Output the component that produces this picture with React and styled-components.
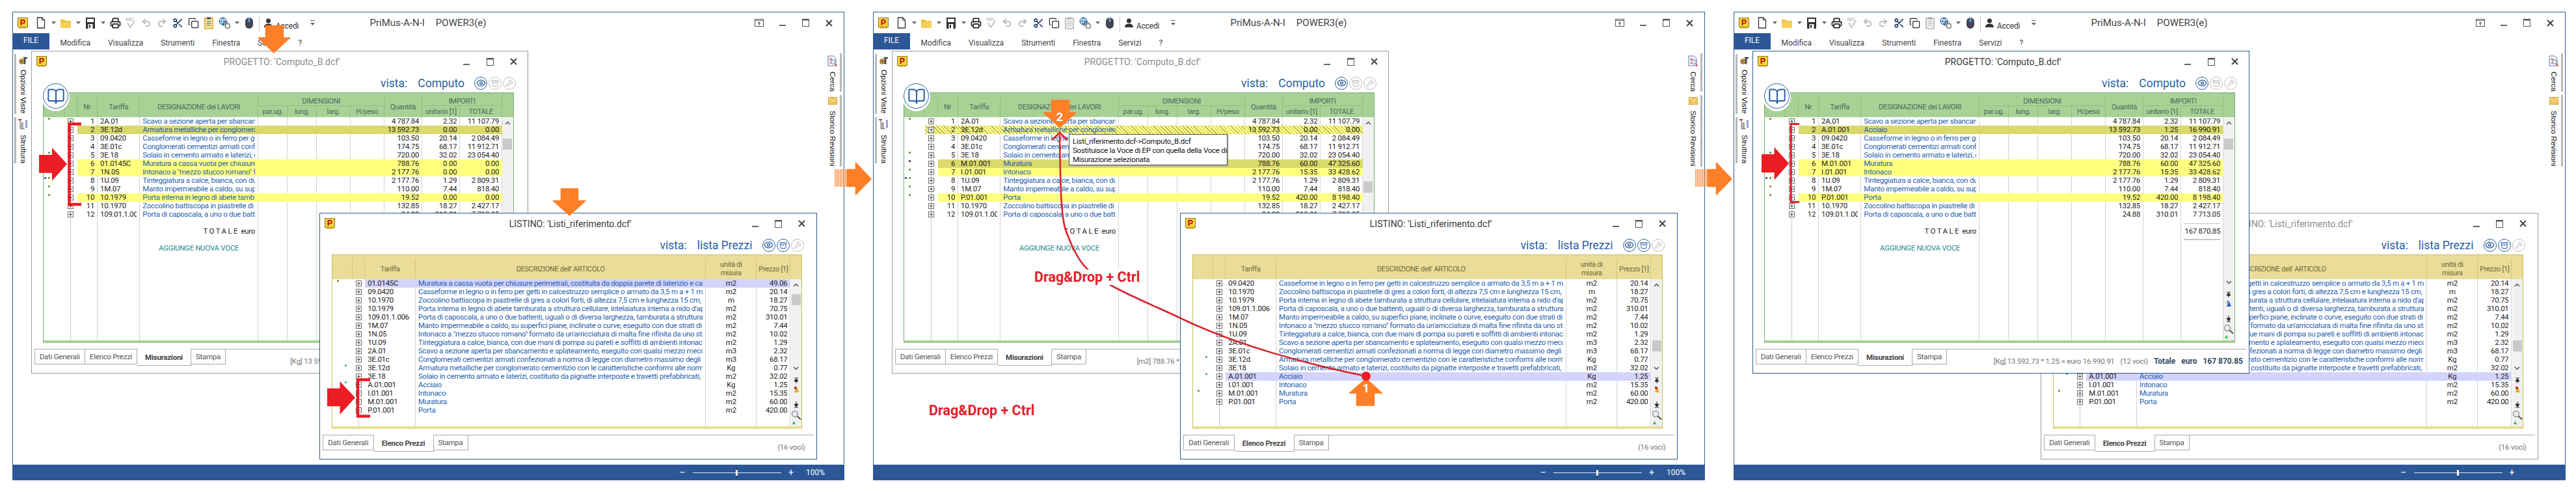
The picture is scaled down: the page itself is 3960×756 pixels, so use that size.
import React from 'react';
import styled, { createGlobalStyle } from 'styled-components';
import { Archive, BookOpen, Copy, Eye, Globe, Printer, Redo2, Scissors, Undo2, Wrench } from 'lucide-react';

const UI = 'Roboto, "Liberation Sans", sans-serif';
const NAVY = '#2b5797';

const GlobalStyle = createGlobalStyle`
  html, body { margin: 0; background: #fff; }
  body { font-family: ${UI}; color: #222; }
  * { box-sizing: border-box; }
`;

const Stage = styled.div`
  position: relative;
  width: 3960px;
  height: 756px;
  overflow: hidden;
  display: flex;
  gap: 44px;
  padding: 18px 0 0 18.5px;
`;

const AppWindow = styled.div`
  flex: none;
  width: 1279px;
  height: 720px;
  display: flex;
  flex-direction: column;
  border: 1px solid #2f5c8f;
  border-bottom: none;
  background: #fff;
`;

const TitleBar = styled.div`
  flex: none;
  height: 32px;
  display: grid;
  grid-template-columns: 1fr auto 1fr;
  align-items: center;
`;

const QuickBar = styled.div`
  display: flex;
  align-items: center;
  gap: 6px;
  padding-left: 7px;
  height: 100%;
`;

const Slot = styled.span`
  flex: none;
  width: ${p => p.$w || 18}px;
  height: 20px;
  display: flex;
  align-items: center;
  justify-content: center;
  margin-left: ${p => p.$ml || 0}px;
`;

const QuickDivider = styled.span`
  flex: none;
  width: 1px;
  height: 24px;
  background: #c9c9c9;
  margin: 4px 0 0 0;
`;

const Accedi = styled.span`
  font-size: 12px;
  letter-spacing: -0.2px;
  color: #333;
  margin: 10px 0 0 -1px;
  width: 36px;
`;

const AppTitle = styled.div`
  display: flex;
  gap: 17px;
  font-size: 15px;
  color: #444;
`;

const WinButtons = styled.div`
  display: flex;
  justify-content: flex-end;
  padding-right: 4px;
`;

const WinButton = styled.span`
  width: 36px;
  height: 24px;
  display: flex;
  align-items: center;
  justify-content: center;
`;

const MenuBar = styled.div`
  flex: none;
  height: 25px;
  display: flex;
  align-items: center;
  gap: 27px;
  font-size: 12px;
  color: #444;
`;

const FileTab = styled.div`
  align-self: stretch;
  width: 56px;
  margin-right: -10px;
  display: flex;
  align-items: center;
  justify-content: center;
  background: ${NAVY};
  color: #fff;
  font-size: 12px;
  padding-bottom: 3px;
`;

const MenuItem = styled.span`
  padding-top: 4px;
`;

const Workspace = styled.div`
  flex: 1;
  min-height: 0;
  display: flex;
`;

const Dock = styled.div`
  flex: none;
  width: 28px;
  display: flex;
  flex-direction: column;
  gap: 5px;
  padding-top: ${p => p.$top}px;
`;

const DockGroup = styled.div`
  height: ${p => p.$h}px;
  width: 25px;
  margin-left: ${p => (p.$right ? 0 : 2)}px;
  border-left: ${p => (p.$right ? 'none' : '3px solid #b8b8b8')};
  border-right: ${p => (p.$right ? '3px solid #b8b8b8' : 'none')};
  display: flex;
  flex-direction: column;
  align-items: center;
  gap: ${p => p.$gap || 7}px;
  padding-top: 3px;
`;

const DockLabel = styled.span`
  writing-mode: vertical-rl;
  font: 11.5px "Liberation Sans", sans-serif;
  color: #111;
  white-space: nowrap;
`;

const MdiArea = styled.div`
  position: relative;
  flex: 1;
  min-width: 0;
`;

const StatusBar = styled.div`
  flex: none;
  height: 24px;
  background: ${NAVY};
  display: flex;
  align-items: center;
  justify-content: flex-end;
  padding-right: ${p => (p.$short ? 76 : 28.5)}px;
  color: #fff;
  font-size: 12px;
`;

const ZoomSign = styled.span`
  font-size: 14px;
  width: 10px;
  text-align: center;
`;

const ZoomTrack = styled.span`
  position: relative;
  width: 136px;
  height: 1px;
  margin: 0 10px 0 11px;
  background: #dfe9f6;
`;

const ZoomThumb = styled.span`
  position: absolute;
  left: 66px;
  top: -4px;
  width: 3px;
  height: 9px;
  background: #fff;
  box-shadow: 0 -5px 0 -1px #1b2f50, 0 5px 0 -1px #1b2f50;
`;

const ZoomPercent = styled.span`
  margin-left: 18px;
  width: 29px;
`;

const MdiWindow = styled.section`
  position: absolute;
  left: ${p => p.$left}px;
  top: ${p => p.$top}px;
  width: 764.5px;
  height: ${p => p.$h}px;
  z-index: ${p => p.$z};
  display: flex;
  flex-direction: column;
  background: #fff;
  border: 1px solid ${p => (p.$active ? '#2f5c8f' : '#9b9b9b')};
`;

const MdiTitle = styled.div`
  flex: none;
  height: 31px;
  display: grid;
  grid-template-columns: 1fr auto 1fr;
  align-items: center;
  padding-left: 7px;
  font-size: 14px;
  color: ${p => (p.$active ? '#3a3a3a' : '#8c8c8c')};
`;

const ViewBar = styled.div`
  flex: none;
  height: 32px;
  display: flex;
  align-items: center;
  justify-content: flex-end;
  padding: 3px ${p => p.$pad}px 0 0;
  color: #2a5f9e;
  font-size: 17.5px;
`;

const ViewName = styled.span`
  margin: 0 13px 0 16px;
`;

const RoundButton = styled.span`
  width: 20px;
  height: 20px;
  margin-left: 2px;
  border-radius: 50%;
  display: flex;
  align-items: center;
  justify-content: center;
  border: 1.5px solid ${p => (p.$on ? '#2a5f9e' : '#bdbdbd')};
  color: ${p => (p.$on ? '#2a5f9e' : '#b5b5b5')};
`;

const BookBadge = styled.span`
  position: absolute;
  left: -1px;
  top: -15px;
  z-index: 2;
  width: 39px;
  height: 39px;
  border-radius: 50%;
  background: #fff;
  border: 1.5px solid #2a5f9e;
  box-shadow: 0 2px 0 2px #fff;
  display: flex;
  align-items: center;
  justify-content: center;
  color: #2a5f9e;
`;

const Table = styled.div`
  position: relative;
  flex: 1;
  min-height: 0;
  width: 723.5px;
  margin-left: 17.5px;
  display: flex;
  flex-direction: column;
  border: 1px solid ${p => p.$edge};
  border-bottom: 4px solid ${p => p.$head};
`;

const HeadGrid = styled.div`
  flex: none;
  height: 37px;
  padding-top: 5px;
  display: grid;
  grid-template-columns: ${p => p.$cols};
  grid-template-rows: 15px 17px;
  background: ${p => p.$head};
  color: ${p => p.$ink};
  font-size: 11px;
  letter-spacing: -0.3px;
`;

const HeadCell = styled.div`
  grid-column: ${p => p.$col};
  grid-row: ${p => p.$row || '1 / 3'};
  display: flex;
  align-items: center;
  justify-content: center;
  text-align: center;
  line-height: 13px;
  white-space: pre-line;
  border-right: ${p => (p.$bare ? 'none' : `1px solid ${p.$line}`)};
  border-bottom: ${p => (p.$under ? `1px solid ${p.$line}` : 'none')};
`;

const TableBody = styled.div`
  flex: 1;
  min-height: 0;
  display: flex;
`;

const Rows = styled.div`
  flex: 1;
  min-width: 0;
  display: flex;
  flex-direction: column;
`;

const RowGrid = styled.div`
  flex: ${p => (p.$fill ? 1 : 'none')};
  display: grid;
  grid-template-columns: ${p => p.$cols};
  height: ${p => (p.$fill ? 'auto' : `${p.$h || 13}px`)};
  font-size: 11.5px;
  letter-spacing: -0.3px;
  line-height: 13px;
`;

const toneBg = {
  yellow: '#ffff80',
  dark: '#d9d96c',
  select: '#d3d3fb',
  hatch: 'repeating-linear-gradient(45deg, #ffff80 0 3px, #a9a95a 3px 4px) fixed',
};

const Cell = styled.div`
  min-width: 0;
  display: flex;
  align-items: center;
  justify-content: ${p => p.$align || 'flex-start'};
  padding: 0 4px;
  white-space: pre;
  color: ${p => p.$ink || '#222'};
  background: ${p => toneBg[p.$tone] || 'transparent'};
  border-right: 1px solid ${p => (p.$tone ? 'transparent' : '#d4d4d4')};

  & > span {
    display: block;
    overflow: hidden;
  }
`;

const MarginCell = styled.div`
  display: flex;
  justify-content: flex-end;
  align-items: flex-start;
  gap: 3px;
  padding: 1px ${p => p.$pad}px 0 0;
`;

const Dot = styled.i`
  width: 3px;
  height: 3px;
  border-radius: 50%;
  background: ${p => p.$c};
`;

const TreeCell = styled.div`
  display: flex;
  align-items: center;
  justify-content: center;
  background:
    linear-gradient(#c9c9c9, #c9c9c9) center / 1px 100% no-repeat,
    ${p => (p.$tone === 'hatch' ? toneBg.hatch : 'transparent')};
`;

const Expand = styled.i`
  width: 9px;
  height: 9px;
  border: 1px solid #6d6d6d;
  background:
    linear-gradient(#444, #444) center / 5px 1px no-repeat,
    linear-gradient(#444, #444) center / 1px 5px no-repeat,
    #fff;
`;

const TotalCell = styled.div`
  display: flex;
  align-items: center;
  padding: 0 4px;
  border-right: 1px solid #d4d4d4;
`;

const TotalBox = styled.div`
  flex: 1;
  height: 26px;
  display: flex;
  align-items: center;
  justify-content: flex-end;
  white-space: nowrap;
  border-top: 1px solid #c6c6c6;
  border-bottom: 2px solid #c6c6c6;
`;

const Spaced = styled.span`
  letter-spacing: 2.4px;
`;

const ScrollColumn = styled.div`
  flex: none;
  width: ${p => p.$w}px;
  display: flex;
  flex-direction: column;
  background: #f1f1f1;
`;

const ScrollSlot = styled.div`
  flex: none;
  height: 17px;
  display: flex;
  align-items: center;
  justify-content: center;
`;

const ScrollTrack = styled.div`
  flex: 1;
  min-height: 0;
  display: flex;
  justify-content: center;
  align-items: flex-start;
`;

const ScrollThumb = styled.div`
  width: 14px;
  height: 17px;
  margin-top: ${p => p.$top}px;
  background: #c9c9c9;
`;

const TabBar = styled.div`
  flex: none;
  height: 26px;
  margin: 9.5px 4px 10.5px;
  display: flex;
  align-items: flex-start;
  border-top: 1px solid #a9a9a9;
  font-size: 11.5px;
  letter-spacing: -0.25px;
  color: #555;
`;

const Tab = styled.div`
  width: ${p => p.$w}px;
  height: ${p => (p.$on ? 26 : 24)}px;
  margin-top: -1px;
  display: flex;
  align-items: center;
  justify-content: center;
  background: #fff;
  border: 1px solid #a9a9a9;
  border-left-width: ${p => (p.$first ? 1 : 0)}px;
  border-top-color: ${p => (p.$on ? '#fff' : '#a9a9a9')};
  font-weight: ${p => (p.$on ? 700 : 400)};
  color: ${p => (p.$on ? '#444' : '#555')};
`;

const TabStatus = styled.div`
  margin-left: auto;
  padding: 11px ${p => p.$pad}px 0 0;
  display: flex;
  gap: 9px;
  white-space: pre;
  color: #777;
`;

const TabTotal = styled.span`
  color: #34495e;
  font-weight: 700;
  font-size: 12px;
  letter-spacing: 0;
`;

const Tip = styled.div`
  position: absolute;
  left: 1643px;
  top: 206px;
  z-index: 6;
  width: 244px;
  height: 48px;
  padding: 3px 5px;
  background: #fff;
  border: 1px solid #555;
  box-shadow: 1px 1px 2px #999;
  font-size: 11.5px;
  letter-spacing: -0.25px;
  line-height: 14px;
  white-space: nowrap;
  color: #111;
`;

const DragLabel = styled.div`
  position: absolute;
  left: ${p => p.$x}px;
  top: ${p => p.$y}px;
  z-index: 6;
  padding: 0 1px;
  background: #fff;
  color: #e3202a;
  font: 700 21.5px/24px Roboto, sans-serif;
  white-space: nowrap;
`;

const Overlay = styled.svg`
  position: absolute;
  left: 0;
  top: 0;
  z-index: 5;
  pointer-events: none;
`;

const WebGlyph = styled.span`
  position: relative;
  display: block;
  width: 18px;
  height: 18px;

  & > svg { position: absolute; }
  & > svg:first-child { left: 0; top: 0; }
  & > svg:last-child { right: 0; bottom: 0; }
`;

const AppLogo = () => (
  <svg width="16" height="17" viewBox="0 0 16 17">
    <rect x="0.5" y="0.5" width="15" height="14" fill="#f6d33c" stroke="#8a7a20" />
    <rect x="2" y="14.5" width="12" height="2" fill="#d9a520" />
    <text x="8" y="12" textAnchor="middle" fontFamily="Liberation Sans" fontWeight="700" fontSize="12.5" fill="#c00000">P</text>
  </svg>
);

const Caret = () => (
  <svg width="7" height="4" viewBox="0 0 7 4"><path d="M0 0h7L3.5 4z" fill="#666" /></svg>
);

const NewDoc = () => (
  <svg width="14" height="18" viewBox="0 0 14 18">
    <path d="M1.5 1h7l4 4v12h-11z" fill="#fff" stroke="#333" strokeWidth="1.3" />
    <path d="M8.5 1v4h4" fill="none" stroke="#333" />
  </svg>
);

const FolderIcon = () => (
  <svg width="18" height="17" viewBox="0 0 18 17">
    <path d="M1 3h6l2 2h8v11H1z" fill="#f0c340" />
    <path d="M1 7h16v9H1z" fill="#f5cf5a" />
  </svg>
);

const SaveIcon = () => (
  <svg width="14" height="17" viewBox="0 0 14 17">
    <path d="M0 0h14v17H0z" fill="#333" />
    <path d="M2 2h10v5H2zM3.5 10h7v7h-7z" fill="#fff" />
    <path d="M5 11h2v5H5z" fill="#333" />
  </svg>
);

const SpellIcon = () => (
  <svg width="18" height="20" viewBox="0 0 18 20">
    <text x="1" y="7" fontSize="6.5" fontFamily="Liberation Sans" fill="#a8a8a8">ABC</text>
    <path d="M4 10l4 7 7-10" fill="none" stroke="#c4c4c4" strokeWidth="2" />
  </svg>
);

const PasteIcon = ({ active }) => (
  <svg width="14" height="19" viewBox="0 0 14 19">
    <rect x="0.8" y="2" width="12.4" height="16" fill={active ? '#fbe9a8' : '#eee'} stroke={active ? '#d9a520' : '#b8b8b8'} strokeWidth="1.5" />
    <rect x="4" y="0.5" width="6" height="3" fill={active ? '#444' : '#aaa'} />
    <path d="M3.5 7h7M3.5 10h7M3.5 13h7" stroke={active ? '#555' : '#bbb'} />
  </svg>
);

const WebIcon = () => (
  <WebGlyph>
    <Globe size={13} color="#2a6fb5" strokeWidth={2.2} />
    <Copy size={11} color="#222" strokeWidth={2} />
  </WebGlyph>
);

const MouseIcon = () => (
  <svg width="14" height="19" viewBox="0 0 14 19">
    <rect x="1" y="1" width="12" height="17" rx="6" fill="#445" />
    <rect x="5.5" y="1" width="3" height="7" fill="#6a97c8" />
  </svg>
);

const UserIcon = () => (
  <svg width="13" height="14" viewBox="0 0 13 14">
    <circle cx="6.5" cy="4" r="3.5" fill="#333" />
    <path d="M0 14c0-4 3-5.5 6.5-5.5S13 10 13 14z" fill="#333" />
  </svg>
);

const CustomizeIcon = () => (
  <svg width="7" height="8" viewBox="0 0 7 8"><path d="M0 .5h7" stroke="#666" /><path d="M0 4h7L3.5 8z" fill="#666" /></svg>
);

const RestoreGlyph = () => (
  <svg width="14" height="12" viewBox="0 0 14 12">
    <rect x="0.5" y="0.5" width="13" height="11" fill="none" stroke="#555" />
    <path d="M0 2.5h14" stroke="#555" />
    <path d="M7 10V5M5 7l2-2 2 2" fill="none" stroke="#333" />
  </svg>
);

const MinGlyph = () => (
  <svg width="10" height="12" viewBox="0 0 10 12"><path d="M0 9h10v2H0z" fill="#666" /></svg>
);

const MaxGlyph = () => (
  <svg width="11" height="12" viewBox="0 0 11 12">
    <rect x="0.5" y="0.5" width="10" height="11" fill="none" stroke="#555" />
    <path d="M0 0h11v2.5H0z" fill="#555" />
  </svg>
);

const CloseGlyph = () => (
  <svg width="11" height="11" viewBox="0 0 11 11"><path d="M1 1l9 9M10 1l-9 9" stroke="#444" strokeWidth="2" /></svg>
);

const ToolsDockIcon = () => (
  <svg width="16" height="16" viewBox="0 0 16 16">
    <circle cx="5" cy="10" r="4.5" fill="#d8a23a" stroke="#5c4520" />
    <path d="M7 2h8v3H12v10H9V5z" fill="#444" />
    <path d="M3 9h3v2H3z" fill="#222" />
  </svg>
);

const TreeDockIcon = () => (
  <svg width="15" height="16" viewBox="0 0 15 16">
    <path d="M0 1h5" stroke="#b33" strokeWidth="2" />
    <path d="M3 2v13h7" fill="none" stroke="#666" />
    <path d="M5 5v10M7 5v10" stroke="#555" />
    <path d="M11 3h3M11 6h3M11 9h3M11 12h3" stroke="#3b3bc0" strokeWidth="1.5" />
  </svg>
);

const SearchDockIcon = () => (
  <svg width="15" height="18" viewBox="0 0 15 18">
    <path d="M1 1h8l4 4v11H1z" fill="#fff" stroke="#5873b0" />
    <path d="M3 5h4M3 7h6M3 12h3" stroke="#b33" />
    <circle cx="9" cy="10" r="3.5" fill="#dfe8f5" stroke="#888" />
    <path d="M11.5 13l3 3.5" stroke="#a33" strokeWidth="1.5" />
  </svg>
);

const MailDockIcon = () => (
  <svg width="16" height="14" viewBox="0 0 16 14">
    <rect x="0.5" y="0.5" width="15" height="13" fill="#f1c557" stroke="#c9a23d" />
    <path d="M1 1l7 7 7-7" fill="none" stroke="#fff" />
  </svg>
);

const Chevron = ({ down }) => (
  <svg width="9" height="6" viewBox="0 0 9 6">
    <path d={down ? 'M1 1l3.5 3.5L8 1' : 'M1 5l3.5-3.5L8 5'} fill="none" stroke="#555" strokeWidth="1.5" />
  </svg>
);

const ScrollTools = ({ blue }) => (
  <svg width="16" height="80" viewBox="0 0 16 80">
    <path d="M5 6h6M8 7l-3 4h6zM8 10v4" stroke="#222" fill="#222" />
    <path d="M5 28h7l-3-8-2 2z" fill={blue ? '#3a5fc0' : '#e0b020'} />
    <circle cx="7" cy="21" r="2.2" fill={blue ? '#7a8fd0' : '#b33'} />
    <path d="M8 42v4M8 50l-3-4h6zM5 51h6" stroke="#222" fill="#222" />
    <circle cx="6" cy="61" r="4.5" fill="#e8eef5" stroke="#999" strokeWidth="1.5" />
    <path d="M9.5 64.5l5.5 5" stroke="#555" strokeWidth="2.2" />
    <path d="M2 77l2.5-5 2.5 5z" fill="#22c030" />
  </svg>
);

const COMPUTO_COLS = '31.5px 20px 31.6px 65.2px 181.8px 45.1px 45px 51.7px 52.2px 58.1px 58.2px 64.8px';
const LISTINO_COLS = '31px 19.8px 77.8px 446.3px 77.9px 52.2px';

const GREEN = { head: '#a8d196', edge: '#78ad78', ink: '#47695a', line: '#8fc080' };
const SAND = { head: '#e9dd99', edge: '#c9bd60', ink: '#6d6738', line: '#d3c77c' };

const DESCR = {
  '01.0145C': 'Muratura a cassa vuota per chiusure perimetrali, costituita da doppia parete di laterizio e camera d\'aria',
  '09.0420': 'Casseforme in legno o in ferro per getti in calcestruzzo semplice o armato da 3,5 m a + 1 m dal piano',
  '10.1970': 'Zoccolino battiscopa in piastrelle di gres a colori forti, di altezza 7,5 cm e lunghezza 15 cm, con collante',
  '10.1979': 'Porta interna in legno di abete tamburata a struttura cellulare, intelaiatura interna a nido d\'ape',
  '109.01.1.006': 'Porta di caposcala, a uno o due battenti, uguali o di diversa larghezza, tamburata a struttura cellulare',
  '1M.07': 'Manto impermeabile a caldo, su superfici piane, inclinate o curve, eseguito con due strati di membrana',
  '1N.05': 'Intonaco a "mezzo stucco romano" formato da un\'arricciatura di malta fine rifinita da uno strato',
  '1U.09': 'Tinteggiatura a calce, bianca, con due mani di pompa su pareti e soffitti di ambienti intonacati',
  '2A.01': 'Scavo a sezione aperta per sbancamento e splateamento, eseguito con qualsi mezzo meccanico',
  '3E.01c': 'Conglomerati cementizi armati confezionati a norma di legge con diametro massimo degli inerti',
  '3E.12d': 'Armatura metalliche per conglomerato cementizio con le caratteristiche conformi alle norme tecniche',
  '3E.18': 'Solaio in cemento armato e laterizi, costituito da pignatte interposte e travetti prefabbricati, con',
  'A.01.001': 'Acciaio',
  'I.01.001': 'Intonaco',
  'M.01.001': 'Muratura',
  'P.01.001': 'Porta',
};

const PRICE_LIST = [
  ['09.0420', 'm2', '20.14'],
  ['10.1970', 'm', '18.27'],
  ['10.1979', 'm2', '70.75'],
  ['109.01.1.006', 'm2', '310.01'],
  ['1M.07', 'm2', '7.44'],
  ['1N.05', 'm2', '10.02'],
  ['1U.09', 'm2', '1.29'],
  ['2A.01', 'm3', '2.32'],
  ['3E.01c', 'm3', '68.17'],
  ['3E.12d', 'Kg', '0.77'],
  ['3E.18', 'm2', '32.02'],
  ['A.01.001', 'Kg', '1.25'],
  ['I.01.001', 'm2', '15.35'],
  ['M.01.001', 'm2', '60.00'],
  ['P.01.001', 'm2', '420.00'],
];

const MEASURES = [
  [1, '2A.01', '4 787.84', '2.32', '11 107.79'],
  [2, '3E.12d', '13 592.73', '0.00', '0.00'],
  [3, '09.0420', '103.50', '20.14', '2 084.49'],
  [4, '3E.01c', '174.75', '68.17', '11 912.71'],
  [5, '3E.18', '720.00', '32.02', '23 054.40'],
  [6, '01.0145C', '788.76', '0.00', '0.00'],
  [7, '1N.05', '2 177.76', '0.00', '0.00'],
  [8, '1U.09', '2 177.76', '1.29', '2 809.31'],
  [9, '1M.07', '110.00', '7.44', '818.40'],
  [10, '10.1979', '19.52', '0.00', '0.00'],
  [11, '10.1970', '132.85', '18.27', '2 427.17'],
  [12, '109.01.1.006', '24.88', '310.01', '7 713.05'],
];

const SHOTS = [
  {
    computoOnTop: false,
    tones: { 2: 'dark', 6: 'yellow', 7: 'yellow', 10: 'yellow' },
    swaps: {},
    dots: { 1: 1, 5: 1, 8: 2, 9: 1, 10: 1 },
    thumb: 15.5,
    status: '[Kg] 13 592.73 * 0.00 = euro 0.00',
    price: {
      rows: [['01.0145C', 'm2', '49.06'], ...PRICE_LIST],
      selected: '01.0145C',
      dots: { '01.0145C': 'green', '3E.12d': 'teal', 'A.01.001': 'teal' },
      thumb: 5.5,
    },
  },
  {
    computoOnTop: false,
    tones: { 2: 'hatch', 6: 'dark', 7: 'yellow', 10: 'yellow' },
    swaps: {
      6: ['M.01.001', '60.00', '47 325.60'],
      7: ['I.01.001', '15.35', '33 428.62'],
      10: ['P.01.001', '420.00', '8 198.40'],
    },
    dots: { 1: 1, 5: 1, 6: 'black', 7: 1, 8: 2, 9: 1, 10: 1 },
    thumb: 81.5,
    status: '[m2] 788.76 * 60.00 = euro 47 325.60',
    price: {
      rows: PRICE_LIST,
      selected: 'A.01.001',
      dots: { '3E.12d': 'teal', 'A.01.001': 'teal', 'M.01.001': 'green' },
      thumb: 76.5,
    },
  },
  {
    computoOnTop: true,
    tones: { 2: 'dark', 6: 'yellow', 7: 'yellow', 10: 'yellow' },
    swaps: {
      2: ['A.01.001', '1.25', '16 990.91'],
      6: ['M.01.001', '60.00', '47 325.60'],
      7: ['I.01.001', '15.35', '33 428.62'],
      10: ['P.01.001', '420.00', '8 198.40'],
    },
    dots: { 1: 1, 5: 1, 8: 2, 9: 1, 10: 1 },
    thumb: 15.5,
    status: '[Kg] 13 592.73 * 1.25 = euro 16 990.91',
    short: true,
    price: {
      rows: PRICE_LIST,
      selected: 'A.01.001',
      dots: { '3E.12d': 'teal', 'A.01.001': 'teal', 'M.01.001': 'green' },
      thumb: 76.5,
    },
  },
];

const WindowControls = () => (
  <WinButtons>
    <WinButton><MinGlyph /></WinButton>
    <WinButton><MaxGlyph /></WinButton>
    <WinButton><CloseGlyph /></WinButton>
  </WinButtons>
);

const ScrollBar = ({ w, thumb, blue }) => (
  <ScrollColumn $w={w}>
    <ScrollSlot><Chevron /></ScrollSlot>
    <ScrollTrack><ScrollThumb $top={thumb} /></ScrollTrack>
    <ScrollSlot><Chevron down /></ScrollSlot>
    <ScrollTools blue={blue} />
  </ScrollColumn>
);

const Tabs = ({ on, children, pad }) => {
  const tabs = [['Dati Generali', 78.5], ['Elenco Prezzi', on === 'Elenco Prezzi' ? 92 : 80], ['Misurazioni', 83], ['Stampa', 53]];
  const shown = on === 'Elenco Prezzi' ? tabs.filter(t => t[0] !== 'Misurazioni') : tabs;
  return (
    <TabBar>
      {shown.map(([name, w], i) => (
        <Tab key={name} $w={w} $on={name === on} $first={i === 0}>{name}</Tab>
      ))}
      <TabStatus $pad={pad}>{children}</TabStatus>
    </TabBar>
  );
};

const RoundButtons = ({ archive }) => (
  <>
    <RoundButton $on><Eye size={15} strokeWidth={2.2} /></RoundButton>
    <RoundButton $on={archive}><Archive size={12} /></RoundButton>
    <RoundButton><Wrench size={12} /></RoundButton>
  </>
);

const ComputoWindow = ({ shot }) => {
  const active = shot.computoOnTop;
  return (
    <MdiWindow $left={0} $top={2} $h={495.5} $z={active ? 3 : 1} $active={active}>
      <MdiTitle $active={active}>
        <AppLogo />
        <span>PROGETTO: 'Computo_B.dcf'</span>
        <WindowControls />
      </MdiTitle>
      <ViewBar $pad={18}>
        vista:<ViewName>Computo</ViewName>
        <RoundButtons />
      </ViewBar>
      <Table $edge={GREEN.edge} $head={GREEN.head}>
        <BookBadge><BookOpen size={28} strokeWidth={1.7} /></BookBadge>
        <HeadGrid $cols={`${COMPUTO_COLS} 1fr`} $head={GREEN.head} $ink={GREEN.ink}>
          <HeadCell $col={1} $line={GREEN.line} />
          <HeadCell $col={2} $line={GREEN.line} />
          <HeadCell $col={3} $line={GREEN.line}>Nr</HeadCell>
          <HeadCell $col={4} $line={GREEN.line}>Tariffa</HeadCell>
          <HeadCell $col={5} $line={GREEN.line}>DESIGNAZIONE dei LAVORI</HeadCell>
          <HeadCell $col="6 / 10" $row={1} $under $line={GREEN.line}>DIMENSIONI</HeadCell>
          {['par.ug.', 'lung.', 'larg.', 'H/peso'].map((h, i) => (
            <HeadCell key={h} $col={6 + i} $row={2} $line={GREEN.line}>{h}</HeadCell>
          ))}
          <HeadCell $col={10} $line={GREEN.line}>Quantità</HeadCell>
          <HeadCell $col="11 / 13" $row={1} $under $line={GREEN.line}>IMPORTI</HeadCell>
          <HeadCell $col={11} $row={2} $line={GREEN.line}>unitario [1]</HeadCell>
          <HeadCell $col={12} $row={2} $line={GREEN.line}>TOTALE</HeadCell>
          <HeadCell $col={13} $bare />
        </HeadGrid>
        <TableBody>
          <Rows>
            {MEASURES.map(([nr, code, qty, unit, total]) => {
              const swap = shot.swaps[nr];
              const tariffa = swap ? swap[0] : code;
              const tone = shot.tones[nr];
              const dots = shot.dots[nr];
              return (
                <RowGrid key={nr} $cols={COMPUTO_COLS}>
                  <MarginCell $pad={22}>
                    {dots === 2 && <Dot $c="#24304a" />}
                    {dots && <Dot $c={dots === 'black' ? '#222' : '#4c8a1e'} />}
                  </MarginCell>
                  <TreeCell $tone={tone === 'hatch' ? tone : undefined}><Expand /></TreeCell>
                  <Cell $tone={tone} $align="flex-end"><span>{nr}</span></Cell>
                  <Cell $tone={tone}><span>{tariffa}</span></Cell>
                  <Cell $tone={tone} $ink="#1f5fae"><span>{DESCR[tariffa]}</span></Cell>
                  <Cell $tone={tone} />
                  <Cell $tone={tone} />
                  <Cell $tone={tone} />
                  <Cell $tone={tone} />
                  <Cell $tone={tone} $align="flex-end"><span>{qty}</span></Cell>
                  <Cell $tone={tone} $align="flex-end"><span>{swap ? swap[1] : unit}</span></Cell>
                  <Cell $tone={tone} $align="flex-end"><span>{swap ? swap[2] : total}</span></Cell>
                </RowGrid>
              );
            })}
            <RowGrid $cols={COMPUTO_COLS} $h={39}>
              <MarginCell $pad={22} />
              <TreeCell />
              <Cell />
              <Cell />
              <Cell $align="flex-end"><span><Spaced>TOTALE</Spaced> euro</span></Cell>
              <Cell /><Cell /><Cell /><Cell /><Cell /><Cell />
              <TotalCell><TotalBox>167 870.85</TotalBox></TotalCell>
            </RowGrid>
            <RowGrid $cols={COMPUTO_COLS}>
              <MarginCell $pad={22} />
              <TreeCell />
              <Cell />
              <Cell />
              <Cell $align="center" $ink="#2b8a8a"><span>AGGIUNGE NUOVA VOCE</span></Cell>
              <Cell /><Cell /><Cell /><Cell /><Cell /><Cell /><Cell />
            </RowGrid>
            <RowGrid $cols={COMPUTO_COLS} $fill>
              <MarginCell $pad={22} />
              <TreeCell />
              <Cell /><Cell /><Cell /><Cell /><Cell /><Cell /><Cell /><Cell /><Cell /><Cell />
            </RowGrid>
          </Rows>
          <ScrollBar w={16.2} thumb={shot.thumb} blue={active} />
        </TableBody>
      </Table>
      <Tabs on="Misurazioni" pad={5}>
        <span>{shot.status}</span>
        <span>(12 voci)</span>
        <TabTotal>Totale</TabTotal>
        <TabTotal>euro</TabTotal>
        <TabTotal>167 870.85</TabTotal>
      </Tabs>
    </MdiWindow>
  );
};

const ListinoWindow = ({ shot }) => {
  const active = !shot.computoOnTop;
  const { rows, selected, dots, thumb } = shot.price;
  return (
    <MdiWindow $left={443.5} $top={251} $h={378.5} $z={2} $active={active}>
      <MdiTitle $active={active}>
        <AppLogo />
        <span>LISTINO: 'Listi_riferimento.dcf'</span>
        <WindowControls />
      </MdiTitle>
      <ViewBar $pad={19}>
        vista:<ViewName>lista Prezzi</ViewName>
        <RoundButtons archive />
      </ViewBar>
      <Table $edge={SAND.edge} $head={SAND.head}>
        <HeadGrid $cols={`${LISTINO_COLS} 1fr`} $head={SAND.head} $ink={SAND.ink}>
          <HeadCell $col={1} $line={SAND.line} />
          <HeadCell $col={2} $line={SAND.line} />
          <HeadCell $col={3} $line={SAND.line}>Tariffa</HeadCell>
          <HeadCell $col={4} $line={SAND.line}>DESCRIZIONE dell' ARTICOLO</HeadCell>
          <HeadCell $col={5} $line={SAND.line}>{'unità di\nmisura'}</HeadCell>
          <HeadCell $col={6} $line={SAND.line}>Prezzo [1]</HeadCell>
          <HeadCell $col={7} $bare />
        </HeadGrid>
        <TableBody>
          <Rows>
            {rows.map(([code, unit, price]) => {
              const tone = code === selected ? 'select' : undefined;
              const dot = dots[code];
              return (
                <RowGrid key={code} $cols={LISTINO_COLS}>
                  <MarginCell $pad={dot === 'teal' ? 9 : 21}>
                    {dot && <Dot $c={dot === 'teal' ? '#12a5a5' : '#4c8a1e'} />}
                  </MarginCell>
                  <TreeCell><Expand /></TreeCell>
                  <Cell $tone={tone}><span>{code}</span></Cell>
                  <Cell $tone={tone} $ink="#1f5fae"><span>{DESCR[code]}</span></Cell>
                  <Cell $tone={tone} $align="center"><span>{unit}</span></Cell>
                  <Cell $tone={tone} $align="flex-end"><span>{price}</span></Cell>
                </RowGrid>
              );
            })}
            <RowGrid $cols={LISTINO_COLS} $fill>
              <MarginCell $pad={22} />
              <TreeCell />
              <Cell /><Cell /><Cell /><Cell />
            </RowGrid>
          </Rows>
          <ScrollBar w={16.5} thumb={thumb} />
        </TableBody>
      </Table>
      <Tabs on="Elenco Prezzi" pad={13}>(16 voci)</Tabs>
    </MdiWindow>
  );
};

const Screen = ({ shot, index }) => (
  <AppWindow>
    <TitleBar>
      <QuickBar>
        <Slot $w={16}><AppLogo /></Slot>
        <Slot $ml={5.5}><NewDoc /></Slot>
        <Slot $w={8}><Caret /></Slot>
        <Slot><FolderIcon /></Slot>
        <Slot $w={8}><Caret /></Slot>
        <Slot><SaveIcon /></Slot>
        <Slot $w={8}><Caret /></Slot>
        <Slot><Printer size={17} color="#222" strokeWidth={2.4} /></Slot>
        <Slot><SpellIcon /></Slot>
        <Slot><Undo2 size={16} color="#bcbcbc" strokeWidth={3} /></Slot>
        <Slot><Redo2 size={16} color="#bcbcbc" strokeWidth={3} /></Slot>
        <Slot><Scissors size={17} color="#1f3f66" strokeWidth={2.2} /></Slot>
        <Slot><Copy size={17} color="#222" strokeWidth={1.7} /></Slot>
        <Slot><PasteIcon active={index === 0} /></Slot>
        <Slot><WebIcon /></Slot>
        <Slot $w={8}><Caret /></Slot>
        <Slot><MouseIcon /></Slot>
        <QuickDivider />
        <Slot $w={14}><UserIcon /></Slot>
        <Accedi>Accedi</Accedi>
        <Slot $w={8} $ml={10}><CustomizeIcon /></Slot>
      </QuickBar>
      <AppTitle><span>PriMus-A-N-I</span><span>POWER3(e)</span></AppTitle>
      <WinButtons>
        <WinButton><RestoreGlyph /></WinButton>
        <WinButton><MinGlyph /></WinButton>
        <WinButton><MaxGlyph /></WinButton>
        <WinButton><CloseGlyph /></WinButton>
      </WinButtons>
    </TitleBar>
    <MenuBar>
      <FileTab>FILE</FileTab>
      {['Modifica', 'Visualizza', 'Strumenti', 'Finestra', 'Servizi', '?'].map(m => (
        <MenuItem key={m}>{m}</MenuItem>
      ))}
    </MenuBar>
    <Workspace>
      <Dock $top={7}>
        <DockGroup $h={92} $gap={8}><ToolsDockIcon /><DockLabel>Opzioni Viste</DockLabel></DockGroup>
        <DockGroup $h={71} $gap={8}><TreeDockIcon /><DockLabel>Struttura</DockLabel></DockGroup>
      </Dock>
      <MdiArea>
        <ComputoWindow shot={shot} />
        <ListinoWindow shot={shot} />
      </MdiArea>
      <Dock $top={6}>
        <DockGroup $right $h={59} $gap={7}><SearchDockIcon /><DockLabel>Cerca</DockLabel></DockGroup>
        <DockGroup $right $h={110} $gap={9}><MailDockIcon /><DockLabel>Storico Revisioni</DockLabel></DockGroup>
      </Dock>
    </Workspace>
    <StatusBar $short={shot.short}>
      <ZoomSign>–</ZoomSign>
      <ZoomTrack><ZoomThumb /></ZoomTrack>
      <ZoomSign>+</ZoomSign>
      {!shot.short && <ZoomPercent>100%</ZoomPercent>}
    </StatusBar>
  </AppWindow>
);

const ORANGE = '#fd7f28';
const RED = '#ec1c24';

const stripes = x0 => Array.from({ length: 7 }, (_, i) => x0 + i * 2.6);

const Annotations = () => (
  <Overlay width="3960" height="756" viewBox="0 0 3960 756">
    <g fill={ORANGE} stroke={ORANGE} strokeWidth="1.5" strokeLinejoin="round">
      <polygon points="408.5,39.5 435.5,39.5 435.5,58 445.5,58 421,81 397,58 408.5,58" />
      <polygon points="862.5,290 888.5,290 888.5,308.5 900,308.5 875.5,331 850.5,308.5 862.5,308.5" />
      <polygon points="1302,260.5 1315.5,260.5 1315.5,250 1339,275 1315.5,299 1315.5,286.5 1302,286.5" />
      <polygon points="2625,260.5 2638.5,260.5 2638.5,250 2662,275 2638.5,299 2638.5,286.5 2625,286.5" />
      <polygon points="1616.5,154 1643.5,154 1643.5,173 1654,173 1629,196 1604.5,173 1616.5,173" />
      <polygon points="2085.5,623 2112.5,623 2112.5,604 2124.5,604 2100,581.5 2074.5,604 2085.5,604" />
    </g>
    {[1284, 2607].map(x0 => stripes(x0).map(x => (
      <path key={x} d={`M${x} 260V287`} stroke={ORANGE} strokeWidth="1.3" />
    )))}
    <g fill={RED}>
      <polygon points="60,238 80,238 80,227 103,252 80,277.7 80,265.7 60,265.7" />
      <polygon points="503,596.7 522.5,596.7 522.5,586 546,611 522.5,637 522.5,624.3 503,624.3" />
      <polygon points="2708,237 2727.5,237 2727.5,226 2750,251 2727.5,276.7 2727.5,265 2708,265" />
    </g>
    <g fill="none" stroke={RED}>
      <path d="M125 190.5H106.5V314H125" strokeWidth="4.3" />
      <path d="M569 583.5H550V639.5H569" strokeWidth="4.3" />
      <path d="M2766 190.5H2753V310.5H2766" strokeWidth="3" />
    </g>
    <path d="M2100 578C2010 560 1900 530 1815 489C1760 463 1700 440 1672 414C1655 398 1645 372 1637 350C1630 320 1630 270 1629 207" fill="none" stroke="#d8232e" strokeWidth="2.6" />
    <path d="M1617 215L1629 204L1641 215" fill="none" stroke="#d8232e" strokeWidth="2.6" />
    <ellipse cx="2100" cy="578" rx="7" ry="7" fill={RED} />
    <text x="1629" y="186" textAnchor="middle" fill="#fff" fontFamily="Roboto" fontWeight="700" fontSize="19">2</text>
    <text x="2100" y="603" textAnchor="middle" fill="#fff" fontFamily="Roboto" fontWeight="700" fontSize="19">1</text>
  </Overlay>
);

const App = () => (
  <Stage>
    <GlobalStyle />
    {SHOTS.map((shot, i) => <Screen key={i} shot={shot} index={i} />)}
    <Annotations />
    <Tip>
      Listi_riferimento.dcf-&gt;Computo_B.dcf<br />
      Sostituisce la Voce di EP con quella della Voce di<br />
      Misurazione selezionata
    </Tip>
    <DragLabel $x={1589} $y={414}>Drag&amp;Drop + Ctrl</DragLabel>
    <DragLabel $x={1427} $y={619}>Drag&amp;Drop + Ctrl</DragLabel>
  </Stage>
);

export default App;
